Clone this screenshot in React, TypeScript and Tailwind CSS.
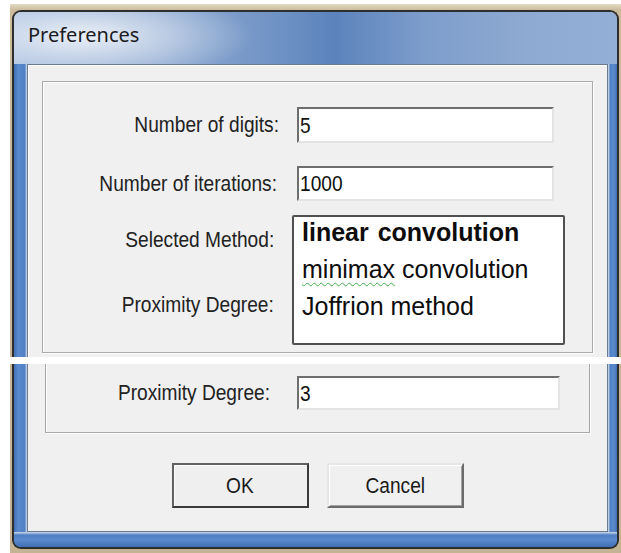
export default function App() {
  const label =
    "text-[22px] leading-[24px] text-[#222] text-right whitespace-nowrap origin-right scale-x-[0.87]";
  const sunken =
    "bg-white border-2 border-t-[#6e6e6e] border-l-[#6e6e6e] border-b-[#e4e4e4] border-r-[#e4e4e4] flex items-center pl-[1px] text-[22px] text-[#111]";
  const narrow = "inline-block origin-left scale-x-[0.87]";
  const sideL =
    "w-[13px] shrink-0 bg-[linear-gradient(90deg,#3f6fb3_0px,#5b8bcd_4px,#4f80c4_11px,#a9c0e0_12px,#c9d6e8_13px)]";
  const sideR =
    "w-[9px] shrink-0 bg-[linear-gradient(90deg,#c9d6e8_0px,#a9c0e0_1px,#4f80c4_2px,#5b8bcd_6px,#3f6fb3_9px)]";

  return (
    <div className="w-[621px] h-[553px] bg-white overflow-hidden pl-[10px] pt-[4px] font-['Liberation_Sans',Arial,sans-serif]">
      <div className="h-full flex flex-col bg-[linear-gradient(180deg,#e3dac6_0px,#cbbc9c_6px,#c4b493_100%)]">
        {/* upper slice of the dialog: title bar and open method list */}
        <div className="px-[2px] pt-[6px]">
          <div className="h-[347px] flex flex-col rounded-t-[9px] border-2 border-b-0 border-[#2e2e2e] overflow-hidden">
            <div className="h-[52px] shrink-0 pl-[14px] pt-[9px] bg-[radial-gradient(ellipse_170px_46px_at_70px_24px,rgba(255,255,255,0.8),rgba(255,255,255,0)_100%),linear-gradient(90deg,#a3bbdc_0%,#8ea9d1_25%,#6d91c4_45%,#5b83bc_53%,#7d9dcb_68%,#8eaad2_85%,#94afd6_100%)]">
              <span className="font-['Noto_Sans','Open_Sans',sans-serif] text-[20px] leading-[28px] text-[#1b1b22]">
                Preferences
              </span>
            </div>
            <div className="flex flex-1 bg-[linear-gradient(180deg,#93afd7_0px,#5a89c9_80px,#4f80c4_100%)]">
              <div className={sideL} />
              <div className="flex-1 bg-[#f0f0f0] border border-b-0 border-[#6d7b90] shadow-[inset_1px_1px_0_#ffffff] pt-[16px] px-[14px]">
                <div className="h-[272px] border border-[#a9a9a9] shadow-[inset_1px_1px_0_#ffffff,1px_1px_0_#ffffff] flex flex-col pt-[25px]">
                  <div className="flex items-center h-[36px]">
                    <div className={"w-[236px] " + label}>Number of digits:</div>
                    <div className={"ml-[18px] w-[257px] h-[36px] " + sunken}>
                      <span className={narrow}>5</span>
                    </div>
                  </div>
                  <div className="flex items-center h-[35px] mt-[23px]">
                    <div className={"w-[234px] " + label}>Number of iterations:</div>
                    <div className={"ml-[20px] w-[257px] h-[35px] " + sunken}>
                      <span className={narrow}>1000</span>
                    </div>
                  </div>
                  <div className="flex mt-[14px]">
                    <div className="w-[231px] flex flex-col items-end">
                      <div className={"mt-[13px] " + label}>Selected Method:</div>
                      <div className={"mt-[41px] " + label}>Proximity Degree:</div>
                    </div>
                    <div className="ml-[18px] w-[273px] h-[130px] bg-white border-2 border-[#505050] rounded-[2px] pl-[8px] text-[25px] leading-[37px] text-[#0d0d0d]">
                      <div className="-mt-[3px] font-bold">
                        linear <span className="ml-[2px]">convolution</span>
                      </div>
                      <div>
                        <span className="underline decoration-wavy decoration-[#45b14a] decoration-1 underline-offset-[4px]">
                          minimax
                        </span>{" "}
                        convolution
                      </div>
                      <div>Joffrion method</div>
                    </div>
                  </div>
                </div>
              </div>
              <div className={sideR} />
            </div>
          </div>
        </div>

        {/* white seam between the two slices */}
        <div className="h-[7px] shrink-0 bg-white" />

        {/* lower slice: proximity field and buttons */}
        <div className="px-[2px]">
          <div className="h-[185px] flex flex-col rounded-b-[9px] border-2 border-t-0 border-[#2e2e2e] overflow-hidden bg-[#4f80c4]">
            <div className="flex h-[168px]">
              <div className={sideL} />
              <div className="flex-1 bg-[#f0f0f0] border border-t-0 border-[#6d7b90] px-[17px] flex flex-col">
                <div className="h-[69px] border border-t-0 border-[#a9a9a9] shadow-[inset_1px_0_0_#ffffff,1px_1px_0_#ffffff] pt-[12px]">
                  <div className="flex items-center h-[34px]">
                    <div className={"w-[224px] " + label}>Proximity Degree:</div>
                    <div className={"ml-[27px] w-[263px] h-[34px] " + sunken}>
                      <span className={narrow}>3</span>
                    </div>
                  </div>
                </div>
                <div className="flex justify-center gap-[18px] mt-[30px]">
                  <button className="w-[137px] h-[45px] bg-[#efefef] border-2 border-[#616161] border-b-[#3a3a3a] border-r-[#3a3a3a] shadow-[inset_1px_1px_0_#ffffff] text-[22px] text-[#1a1a1a]">
                    <span className="inline-block scale-x-[0.87]">OK</span>
                  </button>
                  <button className="w-[137px] h-[45px] bg-[#f0f0f0] border-2 border-t-[#e6e6e6] border-l-[#e6e6e6] border-b-[#6b6b6b] border-r-[#6b6b6b] shadow-[inset_1px_1px_0_#ffffff,inset_-1px_-1px_0_#a3a3a3] text-[22px] text-[#1a1a1a]">
                    <span className="inline-block scale-x-[0.87]">Cancel</span>
                  </button>
                </div>
              </div>
              <div className={sideR} />
            </div>
            <div className="flex-1 bg-[linear-gradient(180deg,#c9d6e8_0px,#a9c0e0_1px,#4f80c4_3px,#5b8bcd_8px,#3f6fb3_15px)]" />
          </div>
        </div>
      </div>
    </div>
  );
}
